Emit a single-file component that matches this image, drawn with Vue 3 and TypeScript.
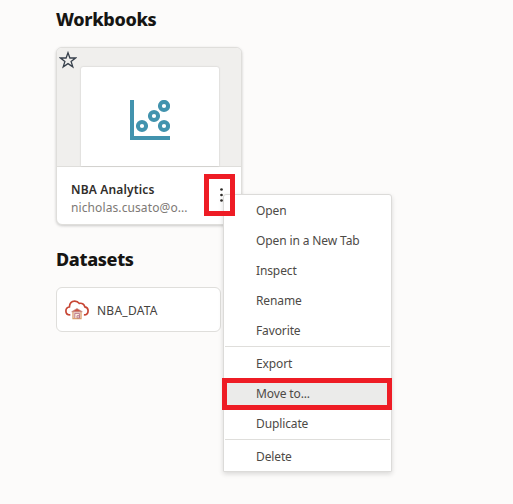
<script setup lang="ts">
const groups: string[][] = [
  ['Open', 'Open in a New Tab', 'Inspect', 'Rename', 'Favorite'],
  ['Export', 'Move to...', 'Duplicate'],
  ['Delete'],
]
const active = 'Move to...'
</script>

<template>
  <main class="page">
    <h2 class="heading">Workbooks</h2>
    <article class="card">
      <div class="preview">
        <svg class="star" width="18" height="18" viewBox="0 0 18 18">
          <path d="M9 1.7 10.9 7H16.5L12.1 10.4 13.8 15.9 9 12.6 4.2 15.9 5.9 10.4 1.5 7H7.1Z" fill="none" stroke="#39424d" stroke-width="1.3" />
        </svg>
        <div class="thumb">
          <svg width="40" height="40" viewBox="0 0 40 40">
            <path d="M0 0H4V36H40V40H0Z" fill="#4293ae" />
            <g fill="none" stroke="#4293ae" stroke-width="4">
              <circle cx="34" cy="6" r="4.1" />
              <circle cx="24" cy="16" r="4.1" />
              <circle cx="12" cy="26" r="4.1" />
              <circle cx="34" cy="26" r="4.1" />
            </g>
          </svg>
        </div>
      </div>
      <div class="info">
        <div class="labels">
          <div class="name">NBA Analytics</div>
          <div class="owner">nicholas.cusato@o...</div>
        </div>
        <svg class="dots" width="3" height="14" viewBox="0 0 3 14" fill="#302d2a">
          <circle cx="1.5" cy="1.5" r="1.35" />
          <circle cx="1.5" cy="7" r="1.35" />
          <circle cx="1.5" cy="12.5" r="1.35" />
        </svg>
      </div>
    </article>

    <h2 class="heading second">Datasets</h2>
    <div class="dataset">
      <svg width="24" height="20" viewBox="0 0 24 20">
        <path d="M5.3 14.9C2.7 14.9.9 13.2.9 10.9.9 8.9 2.3 7.3 4.4 7 4.6 3.5 6.6 1.1 9.7 1.1c2 0 3.5.8 4.5 2.3 3-.6 5.2.8 5.6 3.5 2.1.4 3.3 1.8 3.3 3.8 0 2.5-1.7 4.2-4.2 4.2" fill="none" stroke="#c74634" stroke-width="1.7" />
        <path d="M7.9 11.5V18.6H16.1V11.5" fill="#f1d8cf" stroke="#dba06c" stroke-width="1.1" />
        <path d="M6.7 11.7 12 8.5 17.3 11.7Z" fill="#c95747" stroke="#c98a83" stroke-width=".7" />
        <path d="M9.8 18V13.4H14.4V18M12 15.7h2.4V18H12Z" fill="#fff2df" stroke="#b7748b" stroke-width=".9" />
      </svg>
      <span class="dataset-name">NBA_DATA</span>
    </div>

    <div class="menu">
      <div v-for="(group, g) in groups" :key="g" class="group">
        <div v-for="item in group" :key="item" class="item" :class="{ active: item === active }">
          {{ item }}
        </div>
      </div>
    </div>
    <div class="mark mark-dots"></div>
    <div class="mark mark-move"></div>
  </main>
</template>

<style>
body {
  background: #fcfbfa;
}
</style>

<style scoped>
.page {
  position: relative;
  box-sizing: border-box;
  width: 513px;
  height: 504px;
  padding: 7px 0 0 56px;
  overflow: hidden;
  background: #fcfbfa;
  font-family: 'Noto Sans', sans-serif;
  color: #161513;
  white-space: nowrap;
}
.heading {
  height: 24px;
  margin: 0 0 16px;
  font-size: 18px;
  font-weight: 800;
  letter-spacing: -0.35px;
  line-height: 25px;
}
.heading.second {
  margin-top: 22px;
}
.card {
  box-sizing: border-box;
  width: 186px;
  height: 178px;
  overflow: hidden;
  border: 1px solid #dfdedb;
  border-radius: 6px;
  background: #fff;
  box-shadow: 0 1px 3px rgba(0, 0, 0, .2);
}
.preview {
  position: relative;
  display: flex;
  box-sizing: border-box;
  height: 119px;
  padding: 19px 0 0 24px;
  border-bottom: 1px solid #dfdedb;
  background: #f0efed;
}
.star {
  position: absolute;
  left: 2px;
  top: 3px;
}
.thumb {
  display: flex;
  box-sizing: border-box;
  width: 138px;
  height: 99px;
  padding: 33px 0 0 49px;
  border-radius: 2px 2px 0 0;
  background: #fff;
  box-shadow: 0 0 2px rgba(0, 0, 0, .2);
}
.info {
  display: flex;
  padding: 14px 0 0 14px;
}
.labels {
  width: 149px;
}
.name, .owner {
  height: 18px;
  font-size: 12px;
  line-height: 18px;
}
.name {
  font-weight: 600;
  letter-spacing: 0.15px;
  color: #302d2a;
}
.owner {
  letter-spacing: 0.1px;
  color: #7d7975;
}
.dots {
  margin-top: 7px;
}
.dataset {
  display: flex;
  align-items: center;
  box-sizing: border-box;
  width: 165px;
  height: 45px;
  padding-left: 8px;
  gap: 8px;
  border: 1px solid #dfdedb;
  border-radius: 6px;
  background: #fff;
}
.dataset-name {
  padding-top: 1px;
  font-size: 12px;
  letter-spacing: 0.25px;
  color: #45423e;
}
.menu {
  position: absolute;
  left: 223px;
  top: 194px;
  box-sizing: border-box;
  width: 169px;
  height: 278px;
  padding: 1px;
  border: 1px solid #dcdbd9;
  border-radius: 3px 3px 1px 1px;
  background: #fff;
  box-shadow: 0 2px 5px rgba(0, 0, 0, .14);
}
.group + .group {
  padding-top: 2px;
  border-top: 1px solid #dfdedb;
}
.item {
  height: 30px;
  padding-left: 31px;
  font-size: 12px;
  letter-spacing: -0.12px;
  line-height: 30px;
  color: #4d4a46;
}
.item.active {
  background: #ebebea;
}
.mark {
  position: absolute;
  box-sizing: border-box;
  border: 5px solid #ee1c25;
}
.mark-dots {
  left: 204px;
  top: 174px;
  width: 31px;
  height: 42px;
}
.mark-move {
  left: 222px;
  top: 378px;
  width: 170px;
  height: 32px;
}
</style>
